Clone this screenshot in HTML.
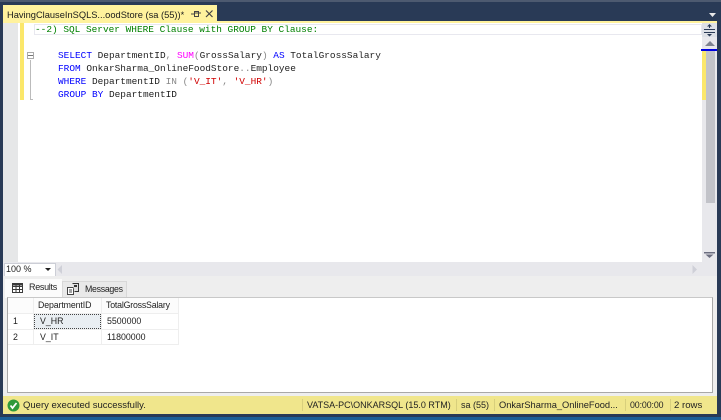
<!DOCTYPE html>
<html><head><meta charset="utf-8"><style>
html,body{margin:0;padding:0;width:721px;height:420px;overflow:hidden;background:#293a56}
div,span.a{position:absolute}
.m{font:9.45px/13px "Liberation Mono",monospace;white-space:pre;color:#222;left:0}
.s{font:8.8px/13px "Liberation Sans",sans-serif;white-space:pre;color:#222}
.b{color:#0000ff}.g{color:#008000}.p{color:#ff00ff}.r{color:#d00000}.y{color:#888}
</style></head><body>
<div style="left:0;top:0;width:721px;height:2px;background:#4d5a70"></div>
<div style="left:3px;top:5px;width:214px;height:18px;background:#fff29d"></div>
<div class="s" style="left:7px;top:9px;font-size:9.3px;color:#1a1a1a">HavingClauseInSQLS...oodStore (sa (55))*</div>
<svg style="position:absolute;left:188px;top:8px" width="28" height="12"><path d="M3 6h3M6.500 3.500v5h4v-5zM11 5h2M6.500 5h4" stroke="#444" fill="none"/><path d="M18 2.500l6.500 6.500M24.500 2.500L18 9" stroke="#444" stroke-width="1.200"/></svg>
<svg style="position:absolute;left:708px;top:12px" width="9" height="6"><path d="M1 1h7L4.500 5z" fill="#e8e8e8"/></svg>
<div style="left:3px;top:21px;width:714px;height:2px;background:#fff29d"></div>

<div style="left:3px;top:23px;width:714px;height:239px;background:#fff"></div>
<div style="left:3px;top:23px;width:15px;height:239px;background:#e6e7e8"></div>
<div style="left:20px;top:23px;width:4px;height:77px;background:#fbe76a"></div>
<div style="left:34px;top:24px;width:666px;height:9px;border:1px solid #e8e8ef;border-right:2px solid #e8e8ef"></div>
<div style="left:27px;top:52px;width:5px;height:5px;border:1px solid #aaa;background:#fff"></div>
<div style="left:28px;top:55px;width:5px;height:1px;background:#777"></div>
<div style="left:30px;top:60px;width:1px;height:40px;background:#bbb"></div>
<div style="left:30px;top:99px;width:3px;height:1px;background:#bbb"></div>

<div class="m" style="left:35px;top:23px"><span class="g">--2) SQL Server WHERE Clause with GROUP BY Clause:</span></div>
<div class="m" style="left:58px;top:49px"><span class="b">SELECT</span> DepartmentID<span class="y">,</span> <span class="p">SUM</span><span class="y">(</span>GrossSalary<span class="y">)</span> <span class="b">AS</span> TotalGrossSalary</div>
<div class="m" style="left:58px;top:62px"><span class="b">FROM</span> OnkarSharma_OnlineFoodStore<span class="y">..</span>Employee</div>
<div class="m" style="left:58px;top:75px"><span class="b">WHERE</span> DepartmentID <span class="y">IN (</span><span class="r">'V_IT'</span><span class="y">,</span> <span class="r">'V_HR'</span><span class="y">)</span></div>
<div class="m" style="left:58px;top:88px"><span class="b">GROUP BY</span> DepartmentID</div>

<div style="left:702px;top:23px;width:15px;height:254px;background:#e8e8ec"></div>
<div style="left:702px;top:23px;width:15px;height:14px;background:#dde0e6"></div>
<svg style="position:absolute;left:703px;top:23px" width="14" height="14"><path d="M1 6.500h11M1 9.500h11M6.500 2v3M6.500 11v2" stroke="#2a3a55"/><path d="M4 3.500h5L6.500 1zM4 11h5L6.500 13.500z" fill="#2a3a55"/></svg>
<svg style="position:absolute;left:704px;top:40px" width="12" height="7"><path d="M1 6h10L6 1z" fill="#7f8290"/></svg>
<div style="left:701px;top:49px;width:16px;height:2px;background:#0000e0"></div>
<div style="left:706px;top:51px;width:9px;height:152px;background:#c2c3c9"></div>
<div style="left:702px;top:51px;width:4px;height:49px;background:#fbe76a"></div>
<svg style="position:absolute;left:704px;top:252px" width="12" height="7"><path d="M0 0h11v1.500H0zM1.500 2.500h8L5.500 6z" fill="#6c6e80"/></svg>

<div style="left:3px;top:262px;width:714px;height:14px;background:#e8e8ec"></div>
<div style="left:4px;top:263px;width:50px;height:12px;background:#fff;border:1px solid #ccced6"></div>
<div class="s" style="left:6px;top:263px;font-size:9px">100 %</div>
<svg style="position:absolute;left:45px;top:268px" width="7" height="4"><path d="M0 0h6L3 3z" fill="#222"/></svg>
<svg style="position:absolute;left:57px;top:265px" width="6" height="10"><path d="M5 0v9L0.500 4.500z" fill="#cfd0d8"/></svg>
<svg style="position:absolute;left:692px;top:265px" width="6" height="10"><path d="M0.500 0v9L5 4.500z" fill="#cfd0d8"/></svg>

<div style="left:3px;top:276px;width:714px;height:120px;background:#eeeeee"></div>
<div style="left:5px;top:279px;width:57px;height:19px;background:#fbfbfb"></div>
<div style="left:62px;top:281px;width:63px;height:15px;background:#e9e9e9;border:1px solid #d8d8d8;border-bottom:0"></div>
<svg style="position:absolute;left:12px;top:283px" width="12" height="11"><path d="M0.500 0.500h10v9h-10zM0.500 3.500h10M0.500 6.500h10M4 0.500v9M7.500 0.500v9" stroke="#3a3a3a" fill="#fff"/><path d="M0.500 0.500h10v2h-10z" fill="#3a3a3a"/></svg>
<svg style="position:absolute;left:67px;top:283px" width="13" height="13"><path d="M0.500 4.500h6v7h-6zM2 7h3M2 9h3" stroke="#444" fill="#fff"/><path d="M5.500 0.500h6v8h-4" stroke="#333" fill="#dfdfdf"/><path d="M7 2h3v2H7z" fill="#333"/></svg>
<div class="s" style="left:29px;top:281px;font-size:9px;letter-spacing:-.3px">Results</div>
<div class="s" style="left:85px;top:283px;font-size:8.800px;letter-spacing:-.3px">Messages</div>

<div style="left:7px;top:297px;width:704px;height:94px;background:#fff;border:1px solid #a8a8a8;border-top-color:#c8c8c8"></div>
<div style="left:8px;top:298px;width:171px;height:16px;background:#fcfcfc"></div>
<div style="left:33px;top:298px;width:1px;height:47px;background:#eeeeee"></div>
<div style="left:101px;top:298px;width:1px;height:47px;background:#eeeeee"></div>
<div style="left:178px;top:298px;width:1px;height:47px;background:#eeeeee"></div>
<div style="left:8px;top:313px;width:171px;height:1px;background:#eeeeee"></div>
<div style="left:8px;top:329px;width:171px;height:1px;background:#eeeeee"></div>
<div style="left:8px;top:344px;width:171px;height:1px;background:#eeeeee"></div>
<div style="left:34px;top:314px;width:65px;height:13px;background:#e9eef2;border:1px dotted #444"></div>
<div class="s" style="left:38px;top:299px;font-size:8.800px;letter-spacing:-.12px">DepartmentID</div>
<div class="s" style="left:106px;top:299px;font-size:8.800px;letter-spacing:-.2px">TotalGrossSalary</div>
<div class="s" style="left:13px;top:315px">1</div>
<div class="s" style="left:13px;top:331px">2</div>
<div class="s" style="left:40px;top:315px">V_HR</div>
<div class="s" style="left:40px;top:331px">V_IT</div>
<div class="s" style="left:107px;top:315px">5500000</div>
<div class="s" style="left:107px;top:331px">11800000</div>

<div style="left:3px;top:396px;width:714px;height:18px;background:#f0e68c"></div>
<svg style="position:absolute;left:7px;top:399px" width="13" height="13"><circle cx="6.500" cy="6.500" r="6" fill="#2f9a3a"/><path d="M3.500 6.500l2 2.500 4-5" stroke="#fff" stroke-width="1.800" fill="none"/></svg>
<div class="s" style="left:23px;top:399px;font-size:9.500px">Query executed successfully.</div>
<div style="left:302px;top:399px;width:1px;height:12px;background:#d8cf7c"></div>
<div class="s" style="left:307px;top:399px;font-size:9px">VATSA-PC\ONKARSQL (15.0 RTM)</div>
<div style="left:456px;top:399px;width:1px;height:12px;background:#d8cf7c"></div>
<div class="s" style="left:461px;top:399px;font-size:9px">sa (55)</div>
<div style="left:494px;top:399px;width:1px;height:12px;background:#d8cf7c"></div>
<div class="s" style="left:499px;top:399px;font-size:9.300px">OnkarSharma_OnlineFood...</div>
<div style="left:625px;top:399px;width:1px;height:12px;background:#d8cf7c"></div>
<div class="s" style="left:630px;top:399px;font-size:8.800px;letter-spacing:-.1px">00:00:00</div>
<div style="left:670px;top:399px;width:1px;height:12px;background:#d8cf7c"></div>
<div class="s" style="left:674px;top:399px;font-size:9.600px">2 rows</div>
<div style="left:0;top:417px;width:721px;height:3px;background:#1c5f96"></div>
</body></html>
